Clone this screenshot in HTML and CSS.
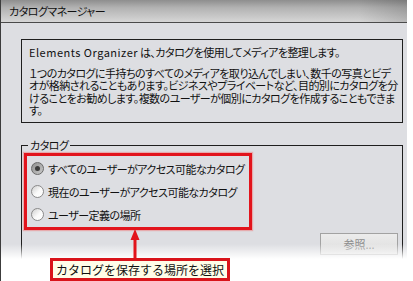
FILE: index.html
```html
<!DOCTYPE html>
<html lang="ja">
<head>
    <meta charset="UTF-8">
    <title>カタログマネージャー</title>
    <link rel="stylesheet" href="styles.css">
</head>
<body>
<div class="window">
    <div class="titlebar">カタログマネージャー</div>
    <div class="content">
        <div class="info">
            <p><span class="latin">Elements Organizer</span> は、カタログを使用してメディアを整理します。</p>
            <p class="desc">１つのカタログに手持ちのすべてのメディアを取り込んでしまい、数千の写真とビデ<br>オが格納されることもあります。ビジネスやプライベートなど、目的別にカタログを分<br>けることをお勧めします。複数のユーザーが個別にカタログを作成することもできま<br>す。</p>
        </div>
        <fieldset class="group">
            <legend>カタログ</legend>
            <div class="choices">
                <label class="choice"><span class="radio checked"></span>すべてのユーザーがアクセス可能なカタログ</label>
                <label class="choice"><span class="radio"></span>現在のユーザーがアクセス可能なカタログ</label>
                <label class="choice"><span class="radio"></span>ユーザー定義の場所</label>
            </div>
            <div class="actions">
                <button class="browse" disabled>参照...</button>
            </div>
        </fieldset>
    </div>
    <div class="fade"></div>
</div>
<svg class="arrow" width="16" height="31" viewBox="0 0 16 31">
    <polygon points="8,1 3.5,12 12.5,12" fill="#e2141c"/>
    <rect x="6.5" y="11" width="3" height="20" fill="#e2141c"/>
</svg>
<div class="callout">カタログを保存する場所を選択</div>
</body>
</html>
```
FILE: styles.css
```css
/* reset */
body,p,fieldset,legend{margin:0;padding:0}
body{
    width:413px;
    height:281px;
    overflow:hidden;
    position:relative;
    background:#fff;
    font:11px/12px "Noto Sans CJK JP", sans-serif;
    font-feature-settings:"palt";
    letter-spacing:-0.55px;
    color:#111;
}
.window{
    width:406px;
    height:281px;
    position:relative;
    overflow:hidden;
    background:#dddee2;
    border-left:1px solid #3c3c3c;
}
.titlebar{
    height:22px;
    line-height:22px;
    padding-left:8px;
    border-bottom:1px solid #4a4a4a;
    background:
        linear-gradient(to right, rgba(0,0,0,0) 88%, rgba(0,0,0,.14)),
        linear-gradient(#8e8e8e, #b2b2b2 35%, #d6d6d6);
    color:#111;
}
.content{
    padding:16px 0 0 20px;
}
.info{
    width:382px;
    height:84px;
    box-sizing:border-box;
    border:1px solid #1e1e1e;
    padding:6px 0 0 7px;
    white-space:nowrap;
    overflow:hidden;
}
.info .desc{
    margin-top:9px;
    line-height:12.4px;
}
.latin{
    letter-spacing:0.5px;
}
.group{
    width:382px;
    height:140px;
    box-sizing:border-box;
    margin-top:16px;
    padding:2px 0 0 2px;
    border:1px solid #1e1e1e;
    min-width:0;
}
.group legend{
    margin-left:4px;
    padding:0 2px;
}
.choices{
    width:228px;
    box-sizing:border-box;
    border:3px solid #e2141c;
    box-shadow:0 0 1px 1px rgba(240,120,120,.5);
    padding:1px 0 1px 4px;
}
.choice{
    display:flex;
    align-items:center;
    gap:4px;
    height:23px;
    white-space:nowrap;
}
.radio{
    flex:none;
    width:13px;
    height:13px;
    box-sizing:border-box;
    border-radius:50%;
    border:1px solid #8a8a8a;
    background:linear-gradient(135deg, #cfcfcf, #fafafa 55%, #fff);
    display:flex;
    align-items:center;
    justify-content:center;
}
.radio.checked{
    border-color:#6a6a6a;
    background:linear-gradient(135deg, #8e8e8e, #c9c9c9);
}
.radio.checked::after{
    content:"";
    width:5px;
    height:5px;
    border-radius:50%;
    background:#3a3a3a;
}
.actions{
    display:flex;
    justify-content:flex-end;
    margin-top:3px;
    padding-right:4px;
}
.browse{
    width:78px;
    height:22px;
    border:1px solid #a2a2a2;
    background:linear-gradient(#ececec, #dcdcdc);
    color:#8c8c8c;
    font:11px "Noto Sans CJK JP", sans-serif;
    padding:0;
}
.fade{
    position:absolute;
    left:0;
    right:0;
    top:244px;
    bottom:0;
    background:linear-gradient(rgba(255,255,255,0), #fff 15px);
}
.arrow{
    position:absolute;
    left:127px;
    top:228px;
}
.callout{
    position:absolute;
    left:50px;
    top:258px;
    width:180px;
    height:23px;
    box-sizing:border-box;
    border:3px solid #d9141b;
    background:#fffde8;
    font-size:12px;
    line-height:17px;
    font-feature-settings:normal;
    letter-spacing:0;
    text-align:center;
    color:#111;
}
```
